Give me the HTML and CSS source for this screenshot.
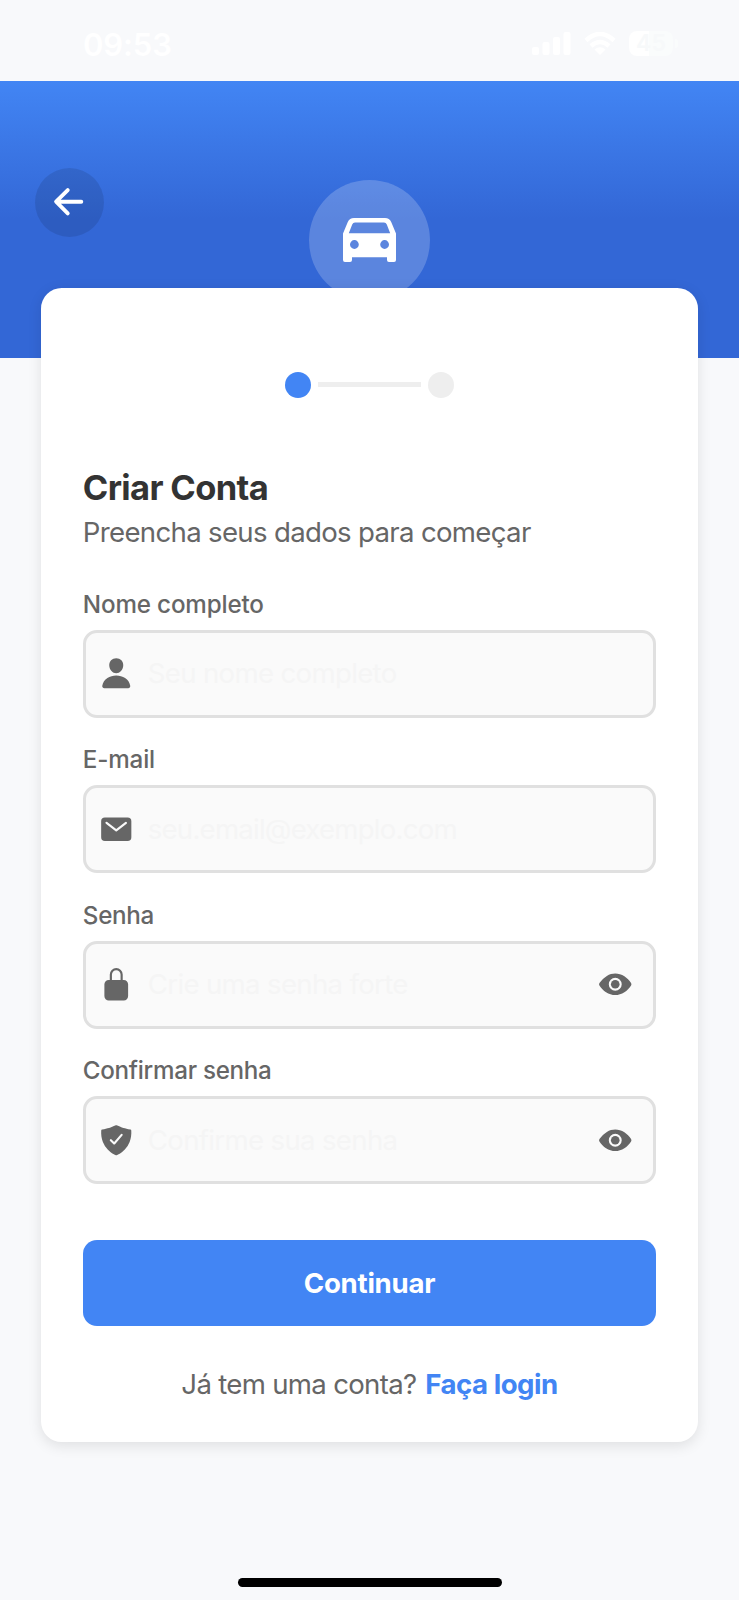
FILE: index.html
```html
<!DOCTYPE html>
<html lang="pt-BR">
<head>
<meta charset="utf-8">
<title>Criar Conta</title>
<link rel="stylesheet" href="styles.css">
</head>
<body>
<div class="status">
  <span class="time">09:53</span>
  <div class="indicators">
    <svg class="signal" viewBox="0 0 39 24"><rect x="0" y="15" width="7" height="8" rx="2"/><rect x="10.5" y="10" width="7" height="13" rx="2"/><rect x="21" y="5" width="7" height="18" rx="2"/><rect x="31.500" y="0" width="7" height="23" rx="2"/></svg>
    <svg class="wifi" viewBox="0 0 32 23"><path d="M2 8.500Q16-4.500 30 8.500M7 14Q16 6 25 14" fill="none" stroke="currentColor" stroke-width="4.500"/><path d="M10.500 17.500Q16 13 21.500 17.500L16 23z"/></svg>
    <div class="battery"><span class="level">45</span></div>
    <span class="cap"></span>
  </div>
</div>
<header class="header">
  <button class="back" aria-label="Voltar"><svg viewBox="0 0 512 512"><path d="M244 400L100 256l144-144M120 256h292" fill="none" stroke="currentColor" stroke-width="48" stroke-linecap="round" stroke-linejoin="round"/></svg></button>
  <div class="logo"><svg viewBox="0 0 53 44"><path fill-rule="evenodd" d="M11 0h31q4.500 0 6.200 4L53 15.500V42q0 2-2 2h-5q-2 0-2-2v-2.700H9V42q0 2-2 2H2q-2 0-2-2V15.500L4.800 4Q6.500 0 11 0zM12 4.600q-2 0-2.800 2L5.800 15.200h41.400L43.800 6.600q-.8-2-2.800-2zM11.400 22.100a4.400 4.400 0 100 8.800 4.400 4.400 0 000-8.800zm30.200 0a4.400 4.400 0 100 8.800 4.400 4.400 0 000-8.800z"/></svg></div>
</header>
<main class="card">
  <div class="steps"><span class="dot active"></span><span class="line"></span><span class="dot"></span></div>
  <h1 class="title">Criar Conta</h1>
  <p class="subtitle">Preencha seus dados para começar</p>
  <form class="form">
    <div class="field">
      <span class="label">Nome completo</span>
      <div class="input">
        <svg class="icon" viewBox="0 0 512 512"><path d="M332.640 64.580C313.180 43.570 286 32 256 32c-30.160 0-57.430 11.500-76.800 32.380-19.580 21.110-29.120 49.800-26.880 80.780C156.760 206.280 203.270 256 256 256s99.160-49.710 103.670-110.820c2.270-30.700-7.330-59.330-27.030-80.600zM432 480H80a31 31 0 01-24.200-11.130c-6.500-7.770-9.120-18.380-7.180-29.110C57.060 392.940 83.400 353.610 124.800 326c36.780-24.510 83.370-38 131.200-38s94.420 13.500 131.200 38c41.400 27.600 67.740 66.930 76.180 113.750 1.940 10.730-.68 21.340-7.180 29.110A31 31 0 01432 480z"/></svg>
        <span class="placeholder">Seu nome completo</span>
      </div>
    </div>
    <div class="field">
      <span class="label">E-mail</span>
      <div class="input">
        <svg class="icon" viewBox="0 0 512 512"><path d="M424 80H88a56.060 56.060 0 00-56 56v240a56.060 56.060 0 0056 56h336a56.060 56.060 0 0056-56V136a56.060 56.060 0 00-56-56zm-14.180 92.630l-144 112a16 16 0 01-19.640 0l-144-112a16 16 0 1119.640-25.260L256 251.730l134.180-104.360a16 16 0 0119.640 25.260z"/></svg>
        <span class="placeholder email">seu.email@exemplo.com</span>
      </div>
    </div>
    <div class="field">
      <span class="label tight">Senha</span>
      <div class="input">
        <svg class="icon" viewBox="0 0 512 512"><path d="M368 192h-16v-80a96 96 0 10-192 0v80h-16a64.070 64.070 0 00-64 64v176a64.070 64.070 0 0064 64h224a64.070 64.070 0 0064-64V256a64.070 64.070 0 00-64-64zm-48 0H192v-80a64 64 0 11128 0z"/></svg>
        <span class="placeholder">Crie uma senha forte</span>
        <svg class="icon" viewBox="0 0 512 512"><circle cx="256" cy="256" r="64"/><path d="M490.840 238.600c-26.460-40.920-60.790-75.680-99.270-100.530C349 110.550 302 96 255.660 96c-42.520 0-84.330 12.150-124.270 36.110-40.730 24.430-77.630 60.120-109.680 106.070a31.920 31.920 0 00-.64 35.540c26.410 41.330 60.400 76.140 98.280 100.650C162 402 207.900 416 255.660 416c46.710 0 93.810-14.430 136.200-41.720 38.460-24.770 72.720-59.660 99.080-100.920a32.200 32.200 0 00-.1-34.760zM256 352a96 96 0 1196-96 96.110 96.110 0 01-96 96z"/></svg>
      </div>
    </div>
    <div class="field">
      <span class="label tight">Confirmar senha</span>
      <div class="input">
        <svg class="icon" viewBox="0 0 512 512"><path d="M479.070 111.360a16 16 0 00-13.150-14.740c-86.500-15.520-122.610-26.740-203.330-63.200a16 16 0 00-13.180 0C168.690 69.880 132.580 81.100 46.080 96.620a16 16 0 00-13.150 14.740c-3.850 61.110 4.360 118.050 24.430 169.240A349.470 349.470 0 00129 393.110c53.470 56.730 110.240 81.370 121.070 85.730a16 16 0 0012 0c10.830-4.360 67.600-29 121.070-85.730a349.470 349.470 0 0071.500-112.510c20.070-51.190 28.280-108.130 24.430-169.240zm-131 75.110l-110.800 128a16 16 0 01-11.410 5.530h-.66a16 16 0 01-11.200-4.570l-49.200-48.200a16 16 0 1122.400-22.860l37 36.290 99.700-115.130a16 16 0 0124.170 20.940z"/></svg>
        <span class="placeholder">Confirme sua senha</span>
        <svg class="icon" viewBox="0 0 512 512"><circle cx="256" cy="256" r="64"/><path d="M490.840 238.600c-26.460-40.920-60.790-75.680-99.270-100.530C349 110.550 302 96 255.660 96c-42.520 0-84.330 12.150-124.270 36.110-40.730 24.430-77.630 60.120-109.680 106.070a31.920 31.920 0 00-.64 35.540c26.410 41.330 60.400 76.140 98.280 100.650C162 402 207.900 416 255.660 416c46.710 0 93.810-14.430 136.200-41.720 38.460-24.770 72.720-59.660 99.080-100.920a32.200 32.200 0 00-.1-34.760zM256 352a96 96 0 1196-96 96.110 96.110 0 01-96 96z"/></svg>
      </div>
    </div>
    <button class="submit" type="button">Continuar</button>
  </form>
  <p class="login"><span class="question">Já tem uma conta?</span><a class="link">Faça login</a></p>
</main>
<div class="home"></div>
</body>
</html>
```

FILE: styles.css
```css
* { box-sizing: border-box; margin: 0; padding: 0; }
body {
  width: 739px;
  height: 1600px;
  display: flex;
  flex-direction: column;
  overflow: hidden;
  background: #f8f9fb;
  font-family: Inter, "Liberation Sans", sans-serif;
  color: #666;
}
svg { display: block; fill: currentColor; flex: none; }
button { border: 0; font: inherit; }
.status {
  height: 81px;
  flex: none;
  display: flex;
  justify-content: space-between;
  padding: 26px 61px 0 83px;
  color: #fff;
}
.time { font-size: 31px; font-weight: 600; line-height: 37px; letter-spacing: -0.1px; }
.indicators { display: flex; height: 35px; align-items: center; }
.signal { width: 39px; height: 24px; margin-right: 13px; }
.wifi { width: 32px; height: 23px; margin-right: 13px; }
.battery {
  width: 44px;
  height: 25px;
  border-radius: 8px;
  background: linear-gradient(90deg, #fff 45%, #fafcfc 45%);
  text-align: center;
}
.level { display: block; font-size: 23px; line-height: 25px; font-weight: 600; color: #f7f9fa; }
.cap { width: 3px; height: 9px; margin-left: 2px; border-radius: 0 3px 3px 0; background: #fafcfc; }
.header {
  height: 276.500px;
  flex: none;
  display: grid;
  grid-template-columns: 1fr auto 1fr;
  align-items: start;
  padding: 0 34.500px;
  background: linear-gradient(#4285f4 0, #3367d6 138px);
  color: #fff;
}
.back {
  width: 69px;
  height: 69px;
  margin-top: 86.500px;
  border-radius: 50%;
  background: rgba(0, 0, 0, 0.1);
  color: #fff;
  display: grid;
  place-items: center;
}
.back svg { width: 41.400px; height: 41.400px; }
.logo {
  width: 121px;
  height: 121px;
  margin-top: 98.500px;
  border-radius: 50%;
  background: rgba(255, 255, 255, 0.2);
  display: grid;
  place-items: center;
}
.logo svg { width: 53px; height: 44px; }
.card {
  position: relative;
  height: 1154px;
  flex: none;
  margin: -69.500px 41.400px 0;
  padding: 83px 41.400px 0;
  border-radius: 20.700px;
  background: #fff;
  box-shadow: 0 3.500px 14px rgba(0, 0, 0, 0.1);
}
.steps { height: 27px; display: flex; justify-content: center; align-items: center; gap: 7px; }
.dot { width: 26px; height: 26px; border-radius: 50%; background: #eee; }
.dot.active { background: #4285f4; }
.line { width: 103.500px; height: 5px; background: #eee; }
.title {
  margin-top: 69px;
  font-size: 34.500px;
  line-height: 41px;
  font-weight: 700;
  letter-spacing: -0.65px;
  color: #333;
}
.subtitle { margin-top: 7.500px; font-size: 27.600px; line-height: 33px; letter-spacing: -0.68px; }
.form { margin-top: 41px; display: flex; flex-direction: column; gap: 27.500px; }
.field { display: flex; flex-direction: column; align-items: flex-start; gap: 11px; }
.label { font-size: 24.200px; line-height: 29px; font-weight: 500; letter-spacing: -0.15px; }
.label.tight { letter-spacing: -0.28px; }
.input {
  width: 100%;
  height: 88px;
  display: flex;
  align-items: center;
  padding: 0 20.500px 0 13.500px;
  border: 3px solid #e0e0e0;
  border-radius: 14px;
  background: #fafafa;
}
.icon { width: 34.500px; height: 34.500px; }
.placeholder {
  flex: 1;
  margin-left: 14px;
  font-size: 27.600px;
  line-height: 33px;
  letter-spacing: -0.67px;
  white-space: nowrap;
  color: #f5f5f5;
}
.placeholder.email { letter-spacing: -0.78px; }
.submit {
  height: 86.500px;
  margin-top: 28px;
  border-radius: 14px;
  background: #4285f4;
  color: #fff;
  font-size: 27.600px;
  font-weight: 700;
  letter-spacing: -0.25px;
}
.login {
  margin-top: 42px;
  display: flex;
  justify-content: center;
  gap: 9px;
  font-size: 27.600px;
  line-height: 33px;
  white-space: nowrap;
}
.question { letter-spacing: -0.7px; }
.link { color: #4285f4; font-weight: 700; letter-spacing: -0.5px; }
.home { width: 264px; height: 9px; margin: 135.500px auto 0; border-radius: 5px; background: #000; flex: none; }
```
